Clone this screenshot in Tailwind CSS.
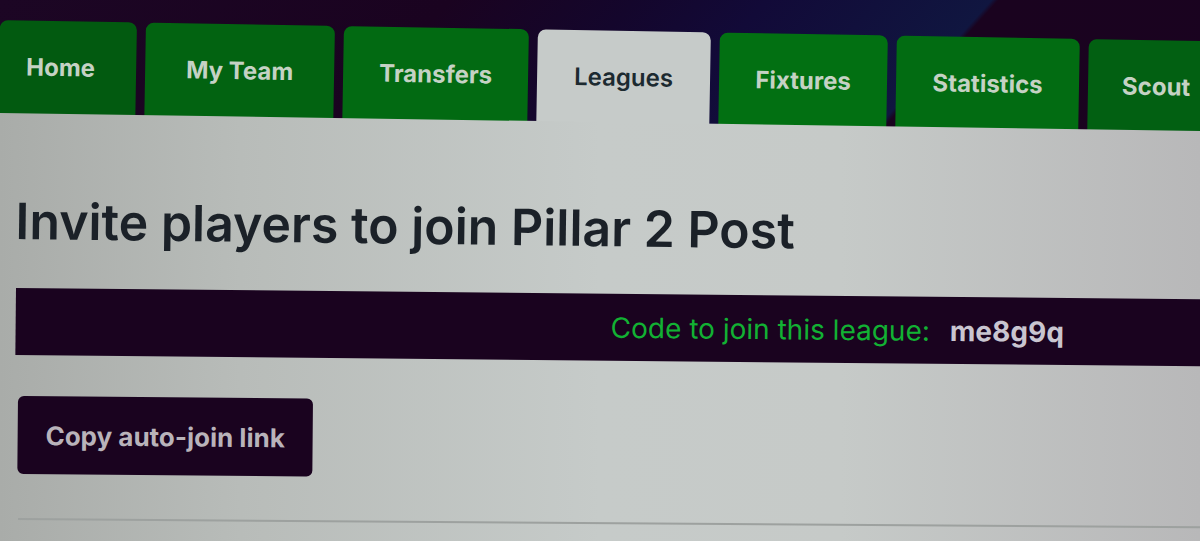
<!DOCTYPE html>
<html lang="en">
<head>
<meta charset="utf-8">
<meta name="viewport" content="width=device-width, initial-scale=1">
<title>Invite players</title>
<script src="https://cdn.jsdelivr.net/npm/@tailwindcss/browser@4"></script>
</head>
<body class="flex min-h-screen flex-col overflow-hidden bg-[#16031c] font-['Inter',sans-serif]">
<header class="overflow-hidden bg-[linear-gradient(132deg,#1c0624_0%,#1a0320_34%,#14062c_48%,#120a38_58%,#101640_75%,#1a031f_75.5%,#1a0320_100%)] pt-5 pb-5">
  <nav aria-label="Main" class="origin-top-left rotate-[1deg]">
    <ul class="flex h-24 gap-[9px] text-2xl font-bold text-[#c5d2c4]">
      <li class="flex-none"><a href="#" class="flex h-full w-[137px] items-center rounded-t-lg bg-[#025a10] pb-0.5 pl-[27px]">Home</a></li>
      <li class="flex-none"><a href="#" class="flex h-full w-[189px] items-center justify-center rounded-t-lg bg-[#026311] pb-0.5">My Team</a></li>
      <li class="flex-none"><a href="#" class="flex h-full w-[185px] items-center justify-center rounded-t-lg bg-[#026a12] pb-0.5">Transfers</a></li>
      <li class="flex-none"><a href="#" aria-current="page" class="flex h-full w-[173px] items-center justify-center rounded-t-lg bg-[#c6cbc9] pb-0.5 font-semibold text-[#1c2a30]">Leagues</a></li>
      <li class="flex-none"><a href="#" class="flex h-full w-[168px] items-center justify-center rounded-t-lg bg-[#027012] pb-0.5">Fixtures</a></li>
      <li class="flex-none"><a href="#" class="flex h-full w-[183px] items-center justify-center rounded-t-lg bg-[#026c12] pb-0.5">Statistics</a></li>
      <li class="flex-none"><a href="#" class="flex h-full w-[144px] items-center rounded-t-lg bg-[#026012] pb-0.5 pl-[34px]">Scout</a></li>
    </ul>
  </nav>
</header>
<main class="relative -mt-[23px] flex-1 overflow-hidden bg-[linear-gradient(90deg,#a9aca9_0%,#b8bcb9_20%,#c6cbc9_50%,#c6cac8_70%,#b8b8b9_100%)] pl-4 [clip-path:polygon(0_0,100%_18px,100%_100%,0_100%)]">
  <h1 class="origin-left rotate-[0.7deg] pt-20 text-[50px] leading-14 font-semibold whitespace-nowrap text-[#1b2128]">Invite players to join Pillar 2 Post</h1>
  <section class="mt-[39px] -mr-4 flex h-[67px] origin-top-left rotate-[0.55deg] items-center gap-5 bg-[#1a031f] pl-[595px] text-[28px] whitespace-nowrap">
    <span class="text-[#12b133]">Code to join this league:</span>
    <strong class="font-bold text-[#c9c5d0]">me8g9q</strong>
  </section>
  <button type="button" class="mt-[41px] ml-0.5 flex h-[78px] w-[295px] origin-top-left rotate-[0.5deg] items-center justify-center rounded-md bg-[#1a031f] text-[26px] font-bold text-[#b9b3ba]">Copy auto-join link</button>
  <hr class="mt-[44px] ml-0.5 origin-left rotate-[0.4deg] border-t-2 border-[#9da19f]">
</main>
</body>
</html>
